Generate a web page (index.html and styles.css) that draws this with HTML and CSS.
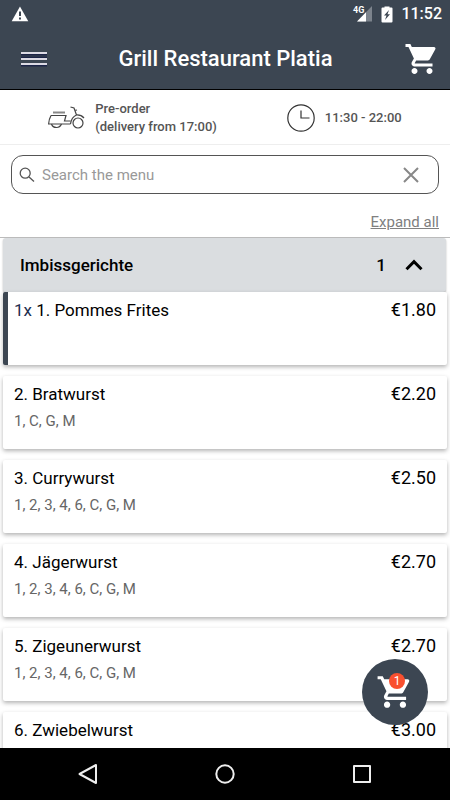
FILE: index.html
```html
<!DOCTYPE html>
<html lang="en">
<head>
    <meta charset="UTF-8">
    <meta name="viewport" content="width=device-width, initial-scale=1.0">
    <title>Grill Restaurant Platia</title>
    <link rel="stylesheet" href="styles.css">
</head>
<body>
    <div class="status-bar">
        <svg class="warning-icon" width="18" height="16" viewBox="0 0 18 16">
            <path d="M9 0.5L17.3 15.3H0.7Z" fill="#fff"/>
            <path d="M9 5.5v4.5M9 11.5v2" stroke="#3c4652" stroke-width="2"/>
        </svg>
        <svg class="signal-icon" width="20" height="16" viewBox="0 0 20 16">
            <path d="M19 0V15.5H4Z" fill="#7c838c"/>
            <path d="M13 6.2V15.5H4Z" fill="#fff"/>
            <text x="0" y="7" class="signal-label">4G</text>
        </svg>
        <svg class="battery-icon" width="12" height="17" viewBox="0 0 12 17">
            <path d="M3.5 1.5V0.5h5v1H10.500q1 0 1 1V15.500q0 1-1 1H1.500q-1 0-1-1V2.500q0-1 1-1Z" fill="#fff"/>
            <path d="M8 4L3 9.500H5.500L4 14L9 8.300H6.500Z" fill="#3c4652"/>
        </svg>
        <span class="clock">11:52</span>
    </div>

    <header class="app-bar">
        <button class="icon-button" aria-label="Menu">
            <svg width="26" height="16" viewBox="0 0 26 16">
                <path d="M0 3H26M0 7H26M0 14H26" stroke="#1c2447" stroke-width="3"/>
                <path d="M0 2H26M0 8H26M0 13H26" stroke="#dcdae4" stroke-width="2"/>
            </svg>
        </button>
        <h1 class="app-title">Grill Restaurant Platia</h1>
        <button class="icon-button" aria-label="Cart">
            <svg width="36" height="36" viewBox="0 0 24 24" fill="#fff">
                <path d="M7 18c-1.100 0-1.990.9-1.990 2S5.900 22 7 22s2-.9 2-2-.9-2-2-2zM1 2v2h2l3.600 7.590-1.350 2.450c-.16.280-.25.610-.25.960 0 1.100.9 2 2 2h12v-2H7.420c-.14 0-.25-.11-.25-.25l.03-.12.9-1.630h7.450c.75 0 1.410-.41 1.750-1.030l3.580-6.490A1 1 0 0 0 20 4H5.210l-.94-2H1zm16 16c-1.100 0-1.990.9-1.990 2s.89 2 1.990 2 2-.9 2-2-.9-2-2-2z"/>
            </svg>
        </button>
    </header>

    <section class="info-bar">
        <div class="info-item">
            <svg width="37" height="24" viewBox="0 0 37 24" fill="none" stroke="#444" stroke-width="1.200">
                <path d="M5 6.500H17" stroke="#888" stroke-width="2"/>
                <path d="M3 9.500H18L16.500 15H22.500"/>
                <path d="M3 9.500Q1 13 .6 18H22.500"/>
                <path d="M3.500 18Q4.500 21.500 8.500 21.500Q12 21.500 13.500 18"/>
                <path d="M22.500 1L26 2L28.500 9M26.500 4.500L29 4M28.500 9Q23.500 11 22.500 18"/>
                <path d="M28 9Q33 8.500 36 12"/>
                <circle cx="30" cy="17" r="5"/>
            </svg>
            <p class="info-text">Pre-order<br>(delivery from 17:00)</p>
        </div>
        <div class="info-item">
            <svg width="28" height="28" viewBox="0 0 28 28" fill="none" stroke="#333" stroke-width="1.200">
                <circle cx="14" cy="14" r="13.200"/>
                <path d="M14 6.500V14H22.500"/>
            </svg>
            <p class="info-text">11:30 - 22:00</p>
        </div>
    </section>

    <form class="search-area">
        <div class="search-box">
            <svg width="16" height="16" viewBox="0 0 16 16" fill="none" stroke="#555" stroke-width="1.300">
                <circle cx="6.200" cy="6.200" r="5"/>
                <path d="M10 10L15 14.500"/>
            </svg>
            <input class="search-input" type="text" placeholder="Search the menu" aria-label="Search the menu">
            <button class="icon-button" type="reset" aria-label="Clear">
                <svg width="16" height="16" viewBox="0 0 16 16" stroke="#888" stroke-width="2">
                    <path d="M1 1L15 15M15 1L1 15"/>
                </svg>
            </button>
        </div>
        <a class="expand-link" href="#">Expand all</a>
    </form>

    <main class="menu">
        <button class="category">
            <span class="category-name">Imbissgerichte</span>
            <span class="category-count">1</span>
            <svg width="18" height="12" viewBox="0 0 18 12" fill="none" stroke="#000" stroke-width="3">
                <path d="M1.500 10.200L9 2.700L16.500 10.200"/>
            </svg>
        </button>
        <ul class="item-list">
            <li class="item selected">
                <div class="item-row">
                    <span><span class="item-amount">1x</span> 1. Pommes Frites</span>
                    <span class="item-price">€1.80</span>
                </div>
            </li>
            <li class="item">
                <div class="item-row"><span>2. Bratwurst</span><span class="item-price">€2.20</span></div>
                <p class="item-notes">1, C, G, M</p>
            </li>
            <li class="item">
                <div class="item-row"><span>3. Currywurst</span><span class="item-price">€2.50</span></div>
                <p class="item-notes">1, 2, 3, 4, 6, C, G, M</p>
            </li>
            <li class="item">
                <div class="item-row"><span>4. Jägerwurst</span><span class="item-price">€2.70</span></div>
                <p class="item-notes">1, 2, 3, 4, 6, C, G, M</p>
            </li>
            <li class="item">
                <div class="item-row"><span>5. Zigeunerwurst</span><span class="item-price">€2.70</span></div>
                <p class="item-notes">1, 2, 3, 4, 6, C, G, M</p>
            </li>
            <li class="item">
                <div class="item-row"><span>6. Zwiebelwurst</span><span class="item-price">€3.00</span></div>
            </li>
        </ul>
    </main>

    <footer class="nav-bar">
        <button class="cart-fab" aria-label="Open cart">
            <svg width="38" height="38" viewBox="0 0 24 24" fill="#fff">
                <path d="M7 18c-1.100 0-1.990.9-1.990 2S5.900 22 7 22s2-.9 2-2-.9-2-2-2zM1 2v2h2l3.600 7.590-1.350 2.450c-.16.280-.25.610-.25.960 0 1.100.9 2 2 2h12v-2H7.420c-.14 0-.25-.11-.25-.25l.03-.12.9-1.630h7.450c.75 0 1.410-.41 1.750-1.030l3.580-6.490A1 1 0 0 0 20 4H5.210l-.94-2H1zm16 16c-1.100 0-1.990.9-1.990 2s.89 2 1.990 2 2-.9 2-2-.9-2-2-2z"/>
            </svg>
            <span class="cart-badge">1</span>
        </button>
        <button class="icon-button" aria-label="Back">
            <svg width="22" height="22" viewBox="0 0 22 22" fill="none" stroke="#eee" stroke-width="2" stroke-linejoin="round">
                <path d="M19 2V20L2.500 11Z"/>
            </svg>
        </button>
        <button class="icon-button" aria-label="Home">
            <svg width="22" height="22" viewBox="0 0 22 22" fill="none" stroke="#eee" stroke-width="2">
                <circle cx="11" cy="11" r="8.700"/>
            </svg>
        </button>
        <button class="icon-button" aria-label="Recent apps">
            <svg width="22" height="22" viewBox="0 0 22 22" fill="none" stroke="#eee" stroke-width="2" stroke-linejoin="round">
                <rect x="3" y="3" width="16" height="16"/>
            </svg>
        </button>
    </footer>
</body>
</html>
```
FILE: styles.css
```css
* {
    margin: 0;
    padding: 0;
    box-sizing: border-box;
}

body {
    font-family: Roboto, sans-serif;
    font-size: 17px;
    line-height: 20px;
    color: #000;
    background: #fff;
    height: 100vh;
    display: flex;
    flex-direction: column;
    overflow: hidden;
}

button {
    font: inherit;
    color: inherit;
    background: none;
    border: none;
    cursor: pointer;
}

svg {
    display: block;
    flex-shrink: 0;
}

.status-bar {
    display: flex;
    align-items: center;
    gap: 8px;
    padding: 4px 8px 4px 11px;
    background: #3c4652;
    color: #fff;
}

.warning-icon {
    margin-right: auto;
}

.signal-icon {
    overflow: visible;
}

.signal-label {
    font-size: 9px;
    font-weight: 700;
    fill: #fff;
}

.clock {
    font-size: 16px;
    font-weight: 500;
}

.app-bar {
    display: flex;
    align-items: center;
    justify-content: space-between;
    padding: 13px 10px 12px 21px;
    background: #3c4652;
    border-bottom: 1px solid #000;
    color: #fff;
}

.app-title {
    font-size: 22px;
    font-weight: 500;
    line-height: 36px;
}

.icon-button {
    display: block;
}

.info-bar {
    display: flex;
    justify-content: center;
    align-items: center;
    gap: 70px;
    padding: 10px 0 8px;
    border-bottom: 1px solid #eee;
}

.info-item {
    display: flex;
    align-items: center;
    gap: 10px;
}

.info-text {
    font-size: 13px;
    font-weight: 500;
    line-height: 18px;
    color: #555;
}

.search-area {
    display: flex;
    flex-direction: column;
    align-items: flex-end;
    padding: 10px 11px 5px;
}

.search-box {
    display: flex;
    align-items: center;
    align-self: stretch;
    height: 39px;
    padding: 0 19px 0 7px;
    border: 1px solid #555;
    border-radius: 12px;
}

.search-input {
    flex: 1;
    min-width: 0;
    padding: 0 7px;
    border: none;
    outline: none;
    background: none;
    font: inherit;
    font-size: 15px;
}

.search-input::placeholder {
    color: #999;
}

.expand-link {
    margin-top: 18px;
    font-size: 15px;
    color: #808080;
}

.menu {
    flex: 1;
    min-height: 0;
    overflow: hidden;
    border-top: 1px solid #bbb;
}

.category {
    display: flex;
    align-items: center;
    width: calc(100% - 7px);
    height: 54px;
    margin: 0 3px;
    padding: 0 23px 0 17px;
    background: #dadde0;
    border-radius: 3px;
    font-weight: 500;
    box-shadow: 0 1px 2px rgba(0, 0, 0, 0.3);
}

.category-name {
    margin-right: auto;
}

.category-count {
    margin-right: 19px;
}

.item-list {
    display: flex;
    flex-direction: column;
    gap: 11px;
    padding: 0 3px;
    list-style: none;
}

.item {
    height: 73px;
    flex-shrink: 0;
    padding: 8px 11px;
    background: #fff;
    border-radius: 2px;
    box-shadow: 0 2px 4px rgba(0, 0, 0, 0.3);
}

.item.selected {
    padding-left: 6px;
    border-left: 5px solid #3c4652;
}

.item-row {
    display: flex;
    justify-content: space-between;
}

.item-price {
    font-size: 18px;
}

.item-amount {
    color: #1e2f50;
}

.item-notes {
    margin-top: 7px;
    font-size: 15px;
    color: #666;
}

.nav-bar {
    position: relative;
    display: flex;
    justify-content: space-around;
    align-items: center;
    height: 52px;
    padding: 0 19px;
    background: #000;
}

/* floats over the menu, above the navigation buttons */
.cart-fab {
    position: absolute;
    right: 22px;
    bottom: 75px;
    display: flex;
    align-items: center;
    justify-content: center;
    width: 66px;
    height: 66px;
    border-radius: 50%;
    background: #3c4652;
}

.cart-badge {
    position: absolute;
    top: 14px;
    left: 27px;
    width: 16px;
    height: 16px;
    border-radius: 50%;
    background: #f9502f;
    color: #fff;
    font-size: 12px;
    line-height: 16px;
    text-align: center;
}
```
